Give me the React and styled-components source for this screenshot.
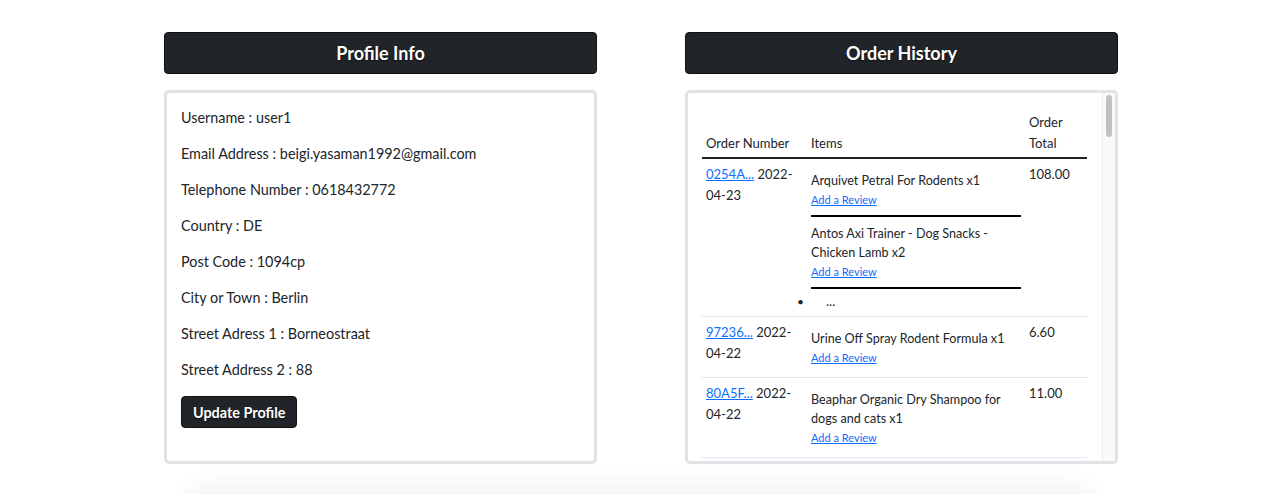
import React from 'react'
import styled, { createGlobalStyle } from 'styled-components'

const GlobalStyle = createGlobalStyle`
    body {
        margin: 0;
        background: #fff;
        font-family: Lato, "Open Sans", sans-serif;
        color: #212529;
    }
`

const profile = [
    ['Username', 'user1'],
    ['Email Address', 'beigi.yasaman1992@gmail.com'],
    ['Telephone Number', '0618432772'],
    ['Country', 'DE'],
    ['Post Code', '1094cp'],
    ['City or Town', 'Berlin'],
    ['Street Adress 1', 'Borneostraat'],
    ['Street Address 2', '88'],
]

const orders = [
    {id: '0254A...', date: '2022-04-23', total: '108.00', items: ['Arquivet Petral For Rodents x1', 'Antos Axi Trainer - Dog Snacks - Chicken Lamb x2'], more: true},
    {id: '97236...', date: '2022-04-22', total: '6.60', items: ['Urine Off Spray Rodent Formula x1']},
    {id: '80A5F...', date: '2022-04-22', total: '11.00', items: ['Beaphar Organic Dry Shampoo for dogs and cats x1']},
    {id: '5C1E2...', date: '2022-04-21', total: '24.95', items: ['Trixie Cat Scratching Post x1', 'Vitakraft Cat Stick Mini x3'], more: true},
    {id: 'B7D90...', date: '2022-04-20', total: '9.80', items: ['Versele-Laga Crispy Muesli Hamsters x1']},
]

export default function App() {
    return (
        <>
            <GlobalStyle />
            <Page>
                <Column>
                    <Title>Profile Info</Title>
                    <Panel>
                        {profile.map(([label, value]) => (
                            <InfoRow key={label}>{label} : {value}</InfoRow>
                        ))}
                        <DarkButton>Update Profile</DarkButton>
                    </Panel>
                </Column>
                <Column>
                    <Title>Order History</Title>
                    <ScrollPanel>
                        <TableArea>
                            <Table>
                                <colgroup>
                                    <col style={{width: 105}} />
                                    <col style={{width: 218}} />
                                    <col style={{width: 62}} />
                                </colgroup>
                                <thead>
                                    <tr>
                                        <th>Order Number</th>
                                        <th>Items</th>
                                        <th>Order Total</th>
                                    </tr>
                                </thead>
                                <tbody>
                                    {orders.map((order, i) => (
                                        <tr key={i}>
                                            <td><OrderLink href='#'>{order.id}</OrderLink> {order.date}</td>
                                            <td>
                                                <ItemList>
                                                    {order.items.map(item => (
                                                        <Item key={item}>
                                                            <ItemName>{item}</ItemName>
                                                            <ReviewLink href='#'>Add a Review</ReviewLink>
                                                        </Item>
                                                    ))}
                                                    {order.more && (
                                                        <MoreItem><Bullet>•</Bullet>...</MoreItem>
                                                    )}
                                                </ItemList>
                                            </td>
                                            <td>{order.total}</td>
                                        </tr>
                                    ))}
                                </tbody>
                            </Table>
                        </TableArea>
                        <ScrollTrack>
                            <ScrollThumb />
                        </ScrollTrack>
                    </ScrollPanel>
                </Column>
            </Page>
            <Footer />
        </>
    )
}

const Page = styled.div`
    display: grid;
    grid-template-columns: 433px 433px;
    column-gap: 88px;
    justify-content: center;
    padding-top: 32px;
    margin-left: 2px;
`

const Column = styled.div`
    display: flex;
    flex-direction: column;
    gap: 16px;
`

const Title = styled.h2`
    margin: 0;
    height: 42px;
    display: flex;
    align-items: center;
    justify-content: center;
    background: #212529;
    border: 1px solid #111;
    border-radius: 4px;
    box-sizing: border-box;
    color: #fff;
    font-size: 18px;
    font-weight: 700;
    text-shadow: 0 1px 2px rgba(0, 0, 0, 0.6);
`

const Panel = styled.div`
    height: 374px;
    box-sizing: border-box;
    border: 3px solid #dfe2e6;
    border-radius: 5px;
    padding: 15px 14px 14px;
`

const ScrollPanel = styled(Panel)`
    display: flex;
    padding: 0;
    overflow: hidden;
`

const TableArea = styled.div`
    flex: 1;
    overflow: hidden;
    padding: 14px 14px 0;
`

const ScrollTrack = styled.div`
    width: 13px;
    flex-shrink: 0;
    background: #fafafa;
    border-left: 1px solid #ececec;
    padding: 2px 3px;
    box-sizing: border-box;
`

const ScrollThumb = styled.div`
    height: 42px;
    border-radius: 4px;
    background: #c1c1c1;
`

const InfoRow = styled.p`
    margin: 0 0 16px;
    font-size: 14.4px;
    line-height: 20px;
`

const DarkButton = styled.button`
    height: 32px;
    padding: 0 11px;
    background: #212529;
    border: 1px solid #111;
    border-radius: 4px;
    color: #fff;
    font-family: Lato, sans-serif;
    font-size: 14.4px;
    font-weight: 700;
    text-shadow: 0 1px 2px rgba(0, 0, 0, 0.6);
    cursor: pointer;
`

const Table = styled.table`
    width: 385px;
    border-collapse: collapse;
    table-layout: fixed;
    font-size: 13px;
    line-height: 21px;

    & th {
        text-align: left;
        vertical-align: bottom;
        font-weight: 400;
        padding: 5px 4px 3px;
        border-bottom: 2px solid #212529;
    }
    & td {
        vertical-align: top;
        padding: 5px 4px 4px;
        border-bottom: 1px solid #e3e6ea;
    }
`

const OrderLink = styled.a`
    color: #0d6efd;
    text-decoration: underline;
`

const ItemList = styled.ul`
    margin: 0;
    padding: 0;
    list-style: none;
`

const Item = styled.li`
    padding: 7px 0 6px;
    width: 210px;
    &:not(:last-child) {
        border-bottom: 2px solid #000;
    }
`

const ItemName = styled.div`
    font-size: 12.6px;
    line-height: 19px;
`

const ReviewLink = styled.a`
    display: block;
    font-size: 11px;
    line-height: 19px;
    color: #0d6efd;
    text-decoration: underline;
`

const MoreItem = styled.li`
    display: flex;
    margin: 2px 0 0 -14px;
    line-height: 21px;
    font-size: 13px;
`

const Bullet = styled.span`
    width: 29px;
    font-size: 12px;
`

const Footer = styled.div`
    width: 900px;
    height: 40px;
    margin: 30px auto 0;
    box-shadow: 0 -8px 24px rgba(0, 0, 0, 0.06);
`
